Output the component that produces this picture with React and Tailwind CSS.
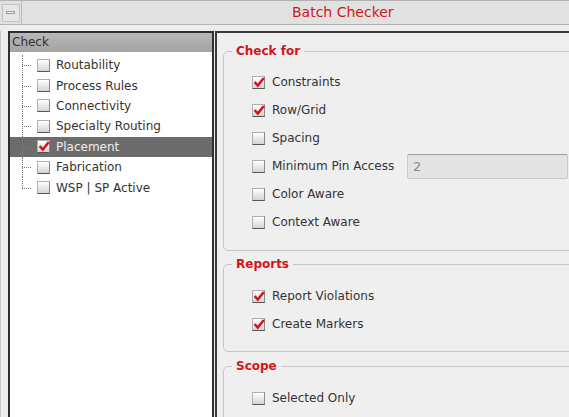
import React from 'react'

const TREE = [
  { label: 'Routability', checked: false },
  { label: 'Process Rules', checked: false },
  { label: 'Connectivity', checked: false },
  { label: 'Specialty Routing', checked: false },
  { label: 'Placement', checked: true, selected: true },
  { label: 'Fabrication', checked: false },
  { label: 'WSP | SP Active', checked: false },
]

function Box({ checked }) {
  return (
    <span className="relative inline-block h-[13px] w-[13px] shrink-0 border border-[#b0b0b0] border-b-[#555] border-r-[#8a8a8a] bg-linear-to-b from-white to-[#d4d4d4]">
      {checked && (
        <svg className="absolute left-[0px] top-[-1px]" width="12" height="12" viewBox="0 0 12 12">
          <path d="M1.6 6 L4.8 9.6 L10.8 2" fill="none" stroke="#d0161c" strokeWidth="2.5" strokeLinejoin="miter" />
        </svg>
      )}
    </span>
  )
}

function TreeRow({ item, last }) {
  return (
    <div className={'flex h-[20.4px] items-center whitespace-nowrap pl-[12px] ' + (item.selected ? 'bg-[#6c6c6c] text-[#ececec]' : 'text-[#333]')}>
      <div className="relative w-[10px] self-stretch">
        <div className={'absolute left-0 top-0 border-l border-dotted border-[#7a7a7a] ' + (last ? 'h-1/2' : 'h-full')} />
        <div className="absolute left-0 top-1/2 w-[9px] border-t border-dotted border-[#7a7a7a]" />
      </div>
      <span className="ml-[5px] flex">
        <Box checked={item.checked} />
      </span>
      <span className="ml-[6px] leading-[16px]">{item.label}</span>
    </div>
  )
}

function Option({ label, checked, children }) {
  return (
    <div className="flex h-[28px] items-center whitespace-nowrap pl-[28px]">
      <Box checked={checked} />
      <span className={'ml-[7px] leading-[16px] text-[#333] ' + (children ? 'w-[135px]' : '')}>{label}</span>
      {children}
    </div>
  )
}

function Group({ title, className, children }) {
  return (
    <fieldset className={'w-[420px] rounded-[5px] border border-[#c6c6c6] pl-0 ' + className}>
      <legend className="ml-[8px] px-[4px] text-[12px] font-bold leading-[16px] text-[#d0161c]">{title}</legend>
      {children}
    </fieldset>
  )
}

export default function App() {
  return (
    <div className="flex h-[417px] w-[569px] flex-col overflow-hidden bg-[#ededed] font-['DejaVu_Sans',sans-serif] text-[12px]">
      <div className="flex h-[25px] shrink-0 border-y border-[#b3b3b3] bg-[#e1e1e1]">
        <div className="flex w-[22px] items-center justify-center border-r border-[#bdbdbd]">
          <div className="flex h-[18px] w-[18px] items-center justify-center border border-[#c4c4c4] bg-[#e6e6e6]">
            <div className="h-[3px] w-[9px] border border-[#9c9c9c] bg-[#f2f2f2]" />
          </div>
        </div>
        <div className="flex-1 pl-[270px] text-[14px] leading-[23px] text-[#d0161c]">Batch Checker</div>
      </div>

      <div className="flex min-h-0 flex-1 pt-[6px]">
        <div className="w-[8px] shrink-0 border-l border-[#c8c8c8]" />
        <div className="flex w-[206px] shrink-0 flex-col border-x-2 border-t-2 border-[#2e2e2e] bg-white">
          <div className="h-[19px] bg-linear-to-b from-[#b8b8b8] to-[#a3a3a3] pl-[2px] leading-[19px] text-[#333]">Check</div>
          <div className="pt-[3px]">
            {TREE.map((item, i) => (
              <TreeRow key={item.label} item={item} last={i === TREE.length - 1} />
            ))}
          </div>
        </div>
        <div className="ml-[1px] min-w-0 flex-1 overflow-hidden border-l-2 border-t-2 border-[#3a3a3a] bg-[#efefef] pl-[6px] pt-[10px]">
          <Group title="Check for" className="pb-[14px] pt-[9px]">
            <Option label="Constraints" checked />
            <Option label="Row/Grid" checked />
            <Option label="Spacing" />
            <Option label="Minimum Pin Access">
              <div className="h-[25px] w-[161px] rounded-[2px] border border-[#cacaca] border-t-[#9c9c9c] bg-[#e3e3e3] pl-[5px] text-[13px] leading-[23px] text-[#8a8a8a]">
                2
              </div>
            </Option>
            <Option label="Color Aware" />
            <Option label="Context Aware" />
          </Group>
          <Group title="Reports" className="mt-[5px] pb-[13px] pt-[10px]">
            <Option label="Report Violations" checked />
            <Option label="Create Markers" checked />
          </Group>
          <Group title="Scope" className="mt-[6px] pb-[14px] pt-[10px]">
            <Option label="Selected Only" />
          </Group>
        </div>
      </div>
    </div>
  )
}
